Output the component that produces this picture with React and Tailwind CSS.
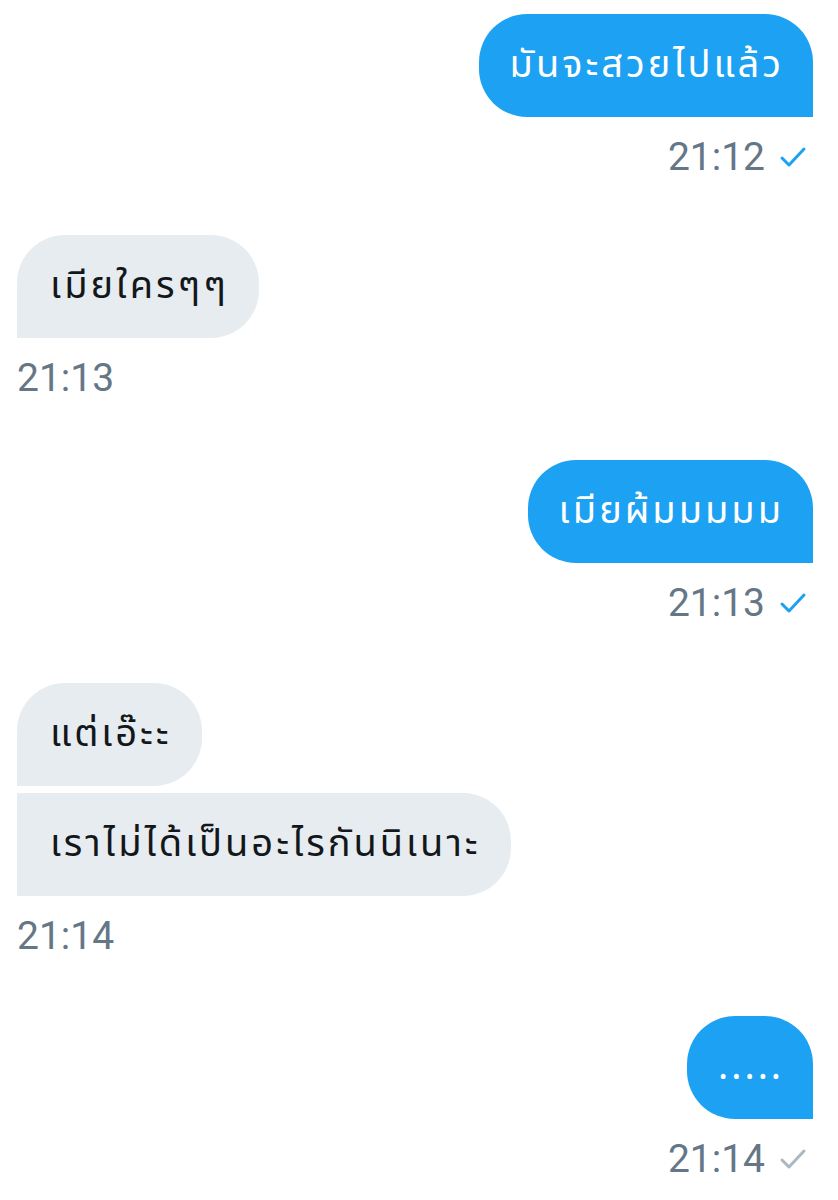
const sans = "font-['Noto_Sans_Thai','Noto_Sans','DejaVu_Sans',sans-serif] tracking-[3px]";

function Check({ read }) {
  return (
    <svg width="28" height="22" viewBox="0 0 28 22" className={read ? "text-[#1da1f2]" : "text-[#aab8c2]"}>
      <path d="M3 12 L10 19 L25 3" fill="none" stroke="currentColor" strokeWidth="3" strokeLinecap="round" strokeLinejoin="round" />
    </svg>
  );
}

function Sent({ text, time, read = true, className = "" }) {
  return (
    <div className={`flex flex-col items-end ${className}`}>
      <div className={`flex h-[103px] items-center rounded-[48px] rounded-br-none bg-[#1da1f2] pl-[31px] pr-[29px] text-[38px] text-white ${sans}`}>
        {text}
      </div>
      <div className="mt-[18px] flex h-[44px] items-center gap-[14px] pr-[6px]">
        <span className="font-['Roboto',sans-serif] text-[39px] text-[#657786]">{time}</span>
        <Check read={read} />
      </div>
    </div>
  );
}

function Bubble({ text, corners }) {
  return (
    <div className={`flex h-[103px] items-center bg-[#e6ecf0] pl-[33px] pr-[30px] text-[38px] text-[#14171a] ${corners} ${sans}`}>
      {text}
    </div>
  );
}

function Received({ texts, time, className = "" }) {
  return (
    <div className={`flex flex-col items-start ${className}`}>
      <div className="flex flex-col items-start gap-[7px]">
        {texts.map((t, i) => {
          let corners = "rounded-[48px] rounded-bl-none";
          if (texts.length > 1 && i > 0) corners = "rounded-[48px] rounded-l-none";
          return <Bubble key={i} text={t} corners={corners} />;
        })}
      </div>
      <div className="mt-[18px] flex h-[44px] items-center">
        <span className="font-['Roboto',sans-serif] text-[39px] text-[#657786]">{time}</span>
      </div>
    </div>
  );
}

export default function App() {
  return (
    <div className="min-h-[1200px] w-[838px] bg-white pl-[17px] pr-[25px] pt-[14px]">
      <Sent text="มันจะสวยไปแล้ว" time="21:12" />
      <Received className="mt-[56px]" texts={["เมียใครๆๆ"]} time="21:13" />
      <Sent className="mt-[60px]" text="เมียผ้มมมมม" time="21:13" />
      <Received className="mt-[58px]" texts={["แต่เอ๊ะะ", "เราไม่ได้เป็นอะไรกันนิเนาะ"]} time="21:14" />
      <Sent className="mt-[58px]" text="....." time="21:14" read={false} />
    </div>
  );
}
